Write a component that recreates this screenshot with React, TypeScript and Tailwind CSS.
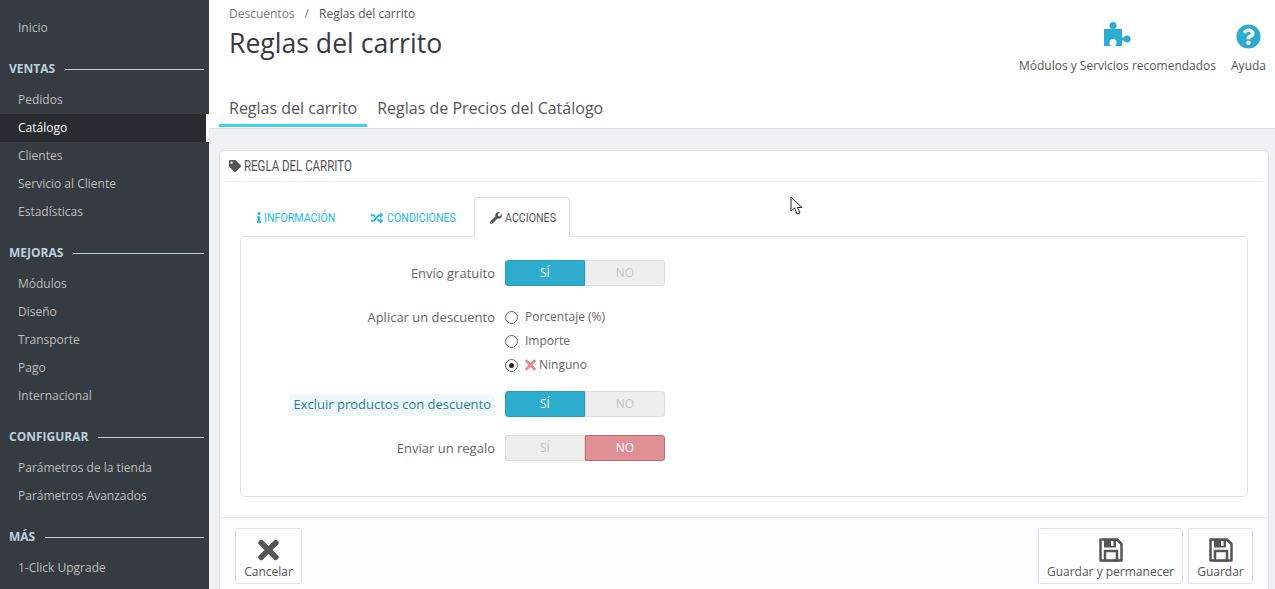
import React from 'react';
import { FaTag, FaInfo, FaRandom, FaWrench, FaQuestionCircle, FaTimes } from 'react-icons/fa';

const menu = [
  { title: 'VENTAS', items: ['Pedidos', 'Catálogo', 'Clientes', 'Servicio al Cliente', 'Estadísticas'] },
  { title: 'MEJORAS', items: ['Módulos', 'Diseño', 'Transporte', 'Pago', 'Internacional'] },
  { title: 'CONFIGURAR', items: ['Parámetros de la tienda', 'Parámetros Avanzados'] },
  { title: 'MÁS', items: ['1-Click Upgrade'] },
];

// the original heading font is a condensed one, so squeeze Roboto to its width
function Narrow({ width, children }: { width: string; children: React.ReactNode }) {
  return (
    <span className={`inline-block ${width}`}>
      <span className='inline-block origin-left scale-x-[0.82] whitespace-nowrap font-["Roboto",sans-serif]'>{children}</span>
    </span>
  );
}

function Sidebar() {
  return (
    <aside className="w-[209px] shrink-0 bg-[#363a41] pt-[14px] text-[12px] text-[#bebebe]">
      <div className="flex h-[28px] items-center pl-[18px]">Inicio</div>
      {menu.map((group) => (
        <div key={group.title}>
          <div className="flex h-[44px] items-center gap-[10px] pl-[9px] pr-[5px] pt-[10px]">
            <span className="text-[12px] font-bold text-[#bcd0dc]">{group.title}</span>
            <span className="h-px flex-1 bg-[#bcd0dc]" />
          </div>
          {group.items.map((item) =>
            item === 'Catálogo' ? (
              <div key={item} className="flex h-[28px] items-center border-r-[3px] border-white bg-[#282b30] pl-[18px] text-white">
                {item}
              </div>
            ) : (
              <div key={item} className="flex h-[28px] items-center pl-[18px]">
                {item}
              </div>
            )
          )}
        </div>
      ))}
    </aside>
  );
}

function Toggle({ on }: { on: boolean }) {
  return (
    <div className="flex h-[26px] w-[160px] text-[12px]">
      {on ? (
        <>
          <div className="flex w-[80px] items-center justify-center rounded-l-[3px] border border-[#2a9cbd] bg-[#2eacce] text-white">SÍ</div>
          <div className="flex w-[80px] items-center justify-center rounded-r-[3px] border border-[#dcdcdc] bg-[#eeeeee] text-[#c3c3c3]">NO</div>
        </>
      ) : (
        <>
          <div className="flex w-[80px] items-center justify-center rounded-l-[3px] border border-[#dcdcdc] bg-[#eeeeee] text-[#c3c3c3]">SÍ</div>
          <div className="flex w-[80px] items-center justify-center rounded-r-[3px] border border-[#c9676d] bg-[#e08f95] text-white">NO</div>
        </>
      )}
    </div>
  );
}

function Radio({ checked, children }: { checked?: boolean; children: React.ReactNode }) {
  return (
    <div className="flex h-[24px] items-center gap-[7px] text-[12px] text-[#666]">
      <span className="flex h-[13px] w-[13px] items-center justify-center rounded-full border border-[#666] bg-white">
        {checked && <span className="h-[5px] w-[5px] rounded-full bg-[#222]" />}
      </span>
      <span className="flex items-center gap-[3px]">{children}</span>
    </div>
  );
}

function FormRow({ label, help, short, children, className }: { label: string; help?: boolean; short?: boolean; children: React.ReactNode; className?: string }) {
  return (
    <div className={`flex items-start ${className ?? ''}`}>
      <div className={`flex ${short ? 'h-[24px]' : 'h-[26px]'} w-[264px] shrink-0 items-center justify-end pr-[10px] pt-[2px] text-[13px] text-[#666]`}>
        {help ? <span className="rounded-[3px] bg-[#eff8fb] px-[4px] py-px text-[#2b7fa3]">{label}</span> : label}
      </div>
      {children}
    </div>
  );
}

function SaveIcon() {
  return (
    <svg width="24" height="24" viewBox="0 0 24 24">
      <path d="M1.5 1.5 H18 L22.5 6 V22.5 H1.5 Z" fill="#fff" stroke="#555" strokeWidth="2.5" strokeLinejoin="round" />
      <rect x="5" y="1.5" width="12" height="8" fill="#555" />
      <rect x="12" y="3" width="2.5" height="5" fill="#fff" />
      <rect x="6" y="13" width="12" height="9.5" fill="#fff" stroke="#555" strokeWidth="2.5" />
    </svg>
  );
}

function PuzzleIcon() {
  return (
    <svg className="ml-[2px]" width="28" height="26" viewBox="0 0 28 26" fill="#2eacce">
      <circle cx="9" cy="3.5" r="3.5" />
      <rect x="7.5" y="5" width="3" height="3" />
      <rect x="0" y="7" width="18" height="17" />
      <rect x="17" y="15.5" width="4" height="3" />
      <circle cx="23" cy="17" r="3.5" />
      <circle cx="9" cy="20.5" r="3.5" fill="#fff" />
      <rect x="7.5" y="21" width="3" height="3" fill="#fff" />
    </svg>
  );
}

function FooterButton({ icon, label, className }: { icon: React.ReactNode; label: string; className: string }) {
  return (
    <div className={`flex h-[56px] flex-col items-center rounded-[3px] border border-[#e2e2e2] bg-white pt-[8px] text-[12px] text-[#555] ${className}`}>
      <div className="flex h-[25px] items-center text-[#555]">{icon}</div>
      <div className="leading-[20px]">{label}</div>
    </div>
  );
}

export default function App() {
  return (
    <div className='relative flex h-[589px] overflow-hidden bg-[#eff1f2] font-["Open_Sans",sans-serif]'>
      <Sidebar />
      <main className="flex min-w-0 flex-1 flex-col">
        <header className="flex h-[129px] shrink-0 justify-between border-b border-[#dfdfdf] bg-white pl-[10px]">
          <div className="flex flex-col">
            <div className="flex h-[27px] items-center pl-[10px] text-[12px] text-[#777]">
              Descuentos<span className="mx-[10px]">/</span><span className="text-[#555]">Reglas del carrito</span>
            </div>
            <h1 className="pl-[10px] text-[26.6px] leading-[32px] text-[#363a41]">Reglas del carrito</h1>
            <div className="mt-[23px] flex text-[16px] text-[#555]">
              <div className="flex h-[45px] items-center border-b-[3px] border-[#3ed2f0] px-[10px] pt-[9px]">Reglas del carrito</div>
              <div className="flex h-[45px] items-center px-[10px] pb-[3px] pt-[9px]">Reglas de Precios del Catálogo</div>
            </div>
          </div>
          <div className="flex gap-[15px] pr-[9px] pt-[22px] text-[12px] text-[#555]">
            <div className="flex flex-col items-center">
              <PuzzleIcon />
              <div className="mt-[9px]">Módulos y Servicios recomendados</div>
            </div>
            <div className="flex flex-col items-center">
              <FaQuestionCircle className="mt-[2px] h-[25px] w-[25px] text-[#2eacce]" />
              <div className="mt-[8px]">Ayuda</div>
            </div>
          </div>
        </header>
        <div className="flex-1 pl-[10px] pr-[6px] pt-[21px]">
          <section className="h-[500px] rounded-[5px] border border-[#dfdfdf] bg-white">
            <div className="mx-[5px] flex h-[31px] items-center gap-[3px] border-b border-[#eeeeee] pl-[4px] text-[#555]">
              <FaTag className="h-[12px] w-[12px]" />
              <span className="text-[14px]"><Narrow width="w-[110px]">REGLA DEL CARRITO</Narrow></span>
            </div>
            <div className="px-[20px] pt-[15px]">
              <div className="relative z-10 flex h-[40px] pl-[16px] text-[13px]">
                <div className="flex w-[114px] items-center gap-[2px] pt-px text-[#25b9f0]">
                  <FaInfo className="h-[11px] w-[6px]" /><Narrow width="w-[74px]">INFORMACIÓN</Narrow>
                </div>
                <div className="flex w-[104px] items-center gap-[3px] pt-px text-[#25b9f0]">
                  <FaRandom className="h-[12px] w-[14px]" /><Narrow width="w-[70px]">CONDICIONES</Narrow>
                </div>
                <div className="flex w-[96px] items-center gap-[3px] rounded-t-[3px] border border-b-0 border-[#dfdfdf] bg-white pl-[15px] pt-px text-[#555]">
                  <FaWrench className="h-[12px] w-[12px]" /><Narrow width="w-[50px]">ACCIONES</Narrow>
                </div>
              </div>
              <div className="-mt-px h-[261px] rounded-[5px] border border-[#dfdfdf] pt-[23px]">
                <FormRow label="Envío gratuito"><Toggle on /></FormRow>
                <FormRow label="Aplicar un descuento" short className="mt-[19px]">
                  <div>
                    <Radio>Porcentaje (%)</Radio>
                    <Radio>Importe</Radio>
                    <Radio checked><FaTimes className="h-[16px] w-[11px] text-[#e08f95]" />Ninguno</Radio>
                  </div>
                </FormRow>
                <FormRow label="Excluir productos con descuento" help className="mt-[14px]"><Toggle on /></FormRow>
                <FormRow label="Enviar un regalo" className="mt-[18px]"><Toggle on={false} /></FormRow>
              </div>
            </div>
            <div className="mt-[20px] flex h-[80px] justify-between border-t border-[#eeeeee] bg-[#fcfdfe] pl-[15px] pr-[15px] pt-[10px]">
              <FooterButton className="w-[67px]" label="Cancelar" icon={<FaTimes className="h-[30px] w-[21px]" />} />
              <div className="flex gap-[5px]">
                <FooterButton className="w-[145px]" label="Guardar y permanecer" icon={<SaveIcon />} />
                <FooterButton className="w-[65px]" label="Guardar" icon={<SaveIcon />} />
              </div>
            </div>
          </section>
        </div>
      </main>
      <svg className="absolute left-[790px] top-[196px]" width="14" height="20" viewBox="0 0 14 20">
        <path d="M1 1 L1 15 L4.5 12 L7 18 L10 17 L7.5 11.5 L12 11.5 Z" fill="#fff" stroke="#222" strokeWidth="1" />
      </svg>
    </div>
  );
}
